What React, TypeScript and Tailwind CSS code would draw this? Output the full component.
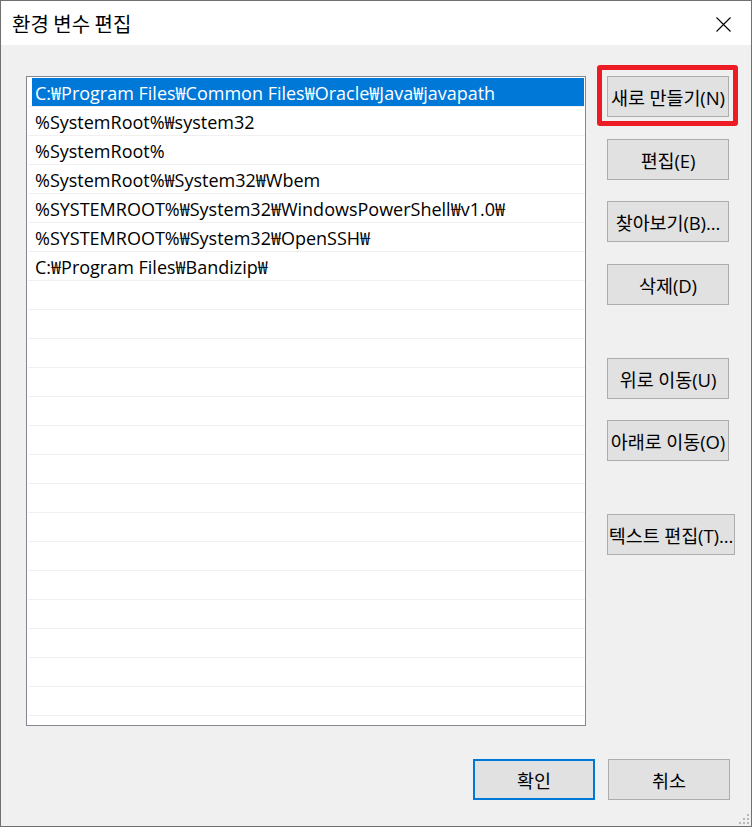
import React from "react";

const rows = [
  "C:₩Program Files₩Common Files₩Oracle₩Java₩javapath",
  "%SystemRoot%₩system32",
  "%SystemRoot%",
  "%SystemRoot%₩System32₩Wbem",
  "%SYSTEMROOT%₩System32₩WindowsPowerShell₩v1.0₩",
  "%SYSTEMROOT%₩System32₩OpenSSH₩",
  "C:₩Program Files₩Bandizip₩",
];

function Btn({ label, wide, className = "" }: { label: string; wide?: boolean; className?: string }) {
  return (
    <div
      className={`h-[41px] ${wide ? "w-[128px]" : "w-[122px]"} bg-[#e1e1e1] border border-[#adadad] flex items-center justify-center pt-[2px] text-[18.5px] text-black whitespace-nowrap tracking-[-0.1px] ${className}`}
    >
      {label}
    </div>
  );
}

export default function App() {
  const all = Array.from({ length: 22 }, (_, i) => rows[i] ?? "");
  return (
    <div className="w-[752px] h-[827px] border border-[#707070] bg-[#f0f0f0] flex flex-col font-['Open_Sans','Noto_Sans_CJK_KR',sans-serif] relative overflow-hidden">
      <div className="h-[44px] bg-white flex items-center justify-between pl-[11px] pr-[20px] shrink-0">
        <span className="text-[20px] text-black font-['Noto_Sans_CJK_KR',sans-serif] leading-none mt-[1px]">환경 변수 편집</span>
        <svg width="15" height="15" viewBox="0 0 15 15" className="mt-[2px]">
          <path d="M0.5 0.5 L14.5 14.5 M14.5 0.5 L0.5 14.5" stroke="#000" strokeWidth="1.1" fill="none" />
        </svg>
      </div>
      <div className="flex pl-[25px] pt-[31px]">
        <div className="w-[560px] h-[650px] border border-[#828790] bg-white pt-[1px] pl-[1px] shrink-0">
          {all.map((t, i) => (
            <div key={i} className="h-[29px] border-b border-[#f0f0f0] flex">
              <div
                className={`ml-[4px] w-[552px] h-[28px] flex items-center pl-[3px] pt-[3px] text-[18px] whitespace-nowrap ${
                  i === 0 ? "bg-[#0078d7] text-white" : "text-black"
                }`}
              >
                {t}
              </div>
            </div>
          ))}
        </div>
        <div className="ml-[21px] flex flex-col">
          <div className="relative">
            <Btn label="새로 만들기(N)" />
            <div className="absolute left-[-10px] top-[-11px] w-[141px] h-[61px] border-[5px] border-[#ed1c24] rounded-[3px]" />
          </div>
          <Btn label="편집(E)" className="mt-[22px]" />
          <Btn label="찾아보기(B)..." className="mt-[21px]" />
          <Btn label="삭제(D)" className="mt-[22px]" />
          <Btn label="위로 이동(U)" className="mt-[53px]" />
          <Btn label="아래로 이동(O)" className="mt-[21px]" />
          <Btn label="텍스트 편집(T)..." wide className="mt-[53px]" />
        </div>
      </div>
      <div className="flex justify-end gap-[13px] pr-[21px] mt-[33px]">
        <div className="h-[41px] w-[122px] bg-[#e1e1e1] border-2 border-[#0078d7] flex items-center justify-center pt-[2px] text-[18.5px] text-black">
          확인
        </div>
        <Btn label="취소" />
      </div>
      <svg width="10" height="10" viewBox="0 0 10 10" className="absolute right-[2px] bottom-[2px]">
        <rect x="8" y="0" width="2" height="2" fill="#b8b8b8" />
        <rect x="4" y="4" width="2" height="2" fill="#b8b8b8" />
        <rect x="8" y="4" width="2" height="2" fill="#b8b8b8" />
        <rect x="0" y="8" width="2" height="2" fill="#b8b8b8" />
        <rect x="4" y="8" width="2" height="2" fill="#b8b8b8" />
        <rect x="8" y="8" width="2" height="2" fill="#b8b8b8" />
      </svg>
    </div>
  );
}
